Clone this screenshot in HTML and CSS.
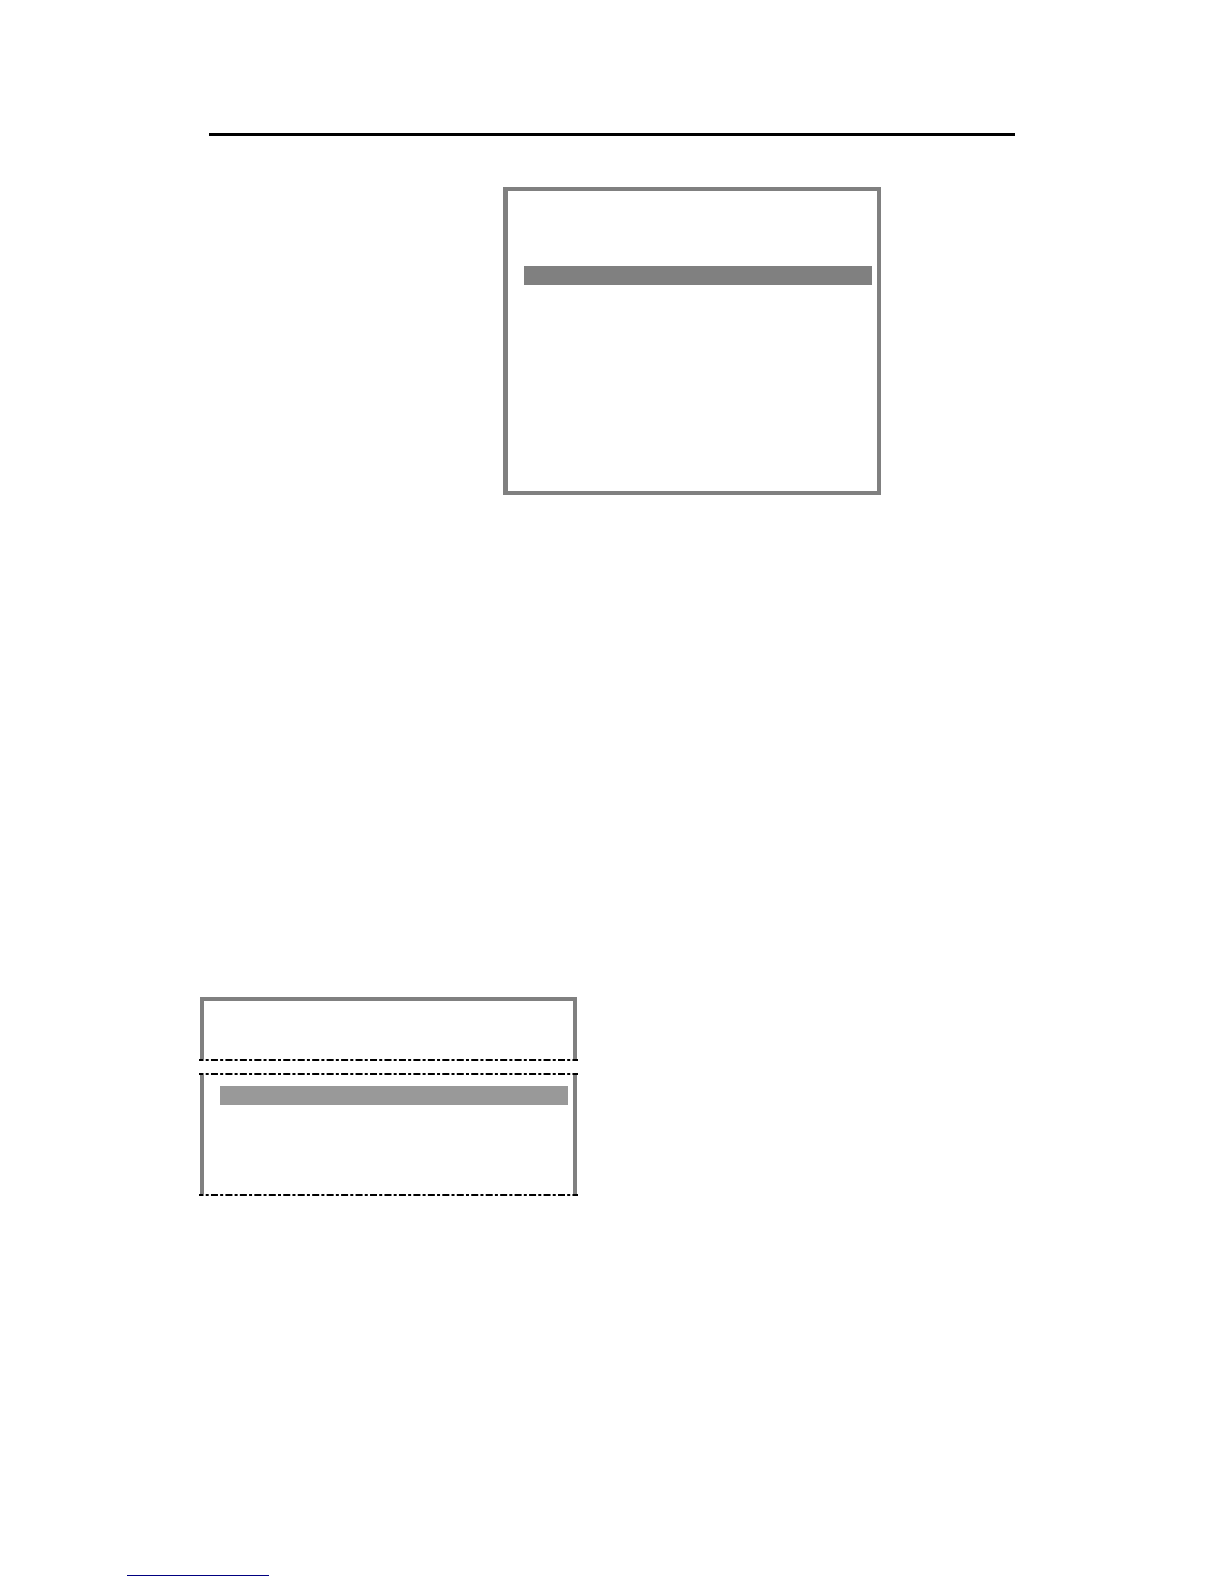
FILE: index.html
```
<!DOCTYPE html>
<html lang="en">
<head>
    <meta charset="UTF-8">
    <meta name="viewport" content="width=device-width, initial-scale=1.0">
    <title>Manual page</title>
    <link rel="stylesheet" href="styles.css">
</head>
<body>

<header class="page-header"></header>

<main class="content">
    <section class="screen screen-full">
        <div class="selected-row"></div>
    </section>

    <section class="screen-split">
        <div class="part part-top"></div>
        <svg class="cut-line" aria-hidden="true"><line x1="0" y1="1" x2="100%" y2="1"/></svg>
        <svg class="cut-line cut-gap" aria-hidden="true"><line x1="0" y1="1" x2="100%" y2="1"/></svg>
        <div class="part part-bottom">
            <div class="selected-row light"></div>
        </div>
        <svg class="cut-line" aria-hidden="true"><line x1="0" y1="1" x2="100%" y2="1"/></svg>
    </section>
</main>

<footer class="page-footer">
    <a class="footer-link" href="#" aria-label="Back to top"></a>
</footer>

</body>
</html>
```

FILE: styles.css
```
* { box-sizing: border-box; }
body { margin: 0; padding-top: 133px; background-color: #fff; font-family: "Liberation Sans", sans-serif; }
.page-header { margin: 0 209px; border-top: 3px solid #000; }
.content { padding: 51px 200px 0; }

/* menu screens */
.screen { border: 4px solid #808080; }
.screen-full { max-width: 378px; margin-left: 303px; padding: 75px 5px 206px 16px; border-left-width: 5px; }
.selected-row { height: 19px; background-color: #808080; }
.selected-row.light { background-color: #999; }

/* screen cut in two parts */
.screen-split { max-width: 379px; margin: 502px 0 0 -1px; }
.part { margin: 0 1px; border: solid #808080; border-width: 0 4px; }
.part-top { padding-top: 58px; border-top-width: 4px; }
.part-bottom { padding: 11px 5px 89px 16px; }
.cut-line { display: block; width: 100%; height: 2px; }
.cut-line line { stroke: #000; stroke-width: 2; stroke-dasharray: 7 2.2 3 2.26; stroke-dashoffset: 2.5; }
.cut-gap { margin-top: 12px; }

.page-footer { padding: 379px 127px 8px; }
.footer-link { display: block; max-width: 142px; border-bottom: 1px solid #000080; }
```
